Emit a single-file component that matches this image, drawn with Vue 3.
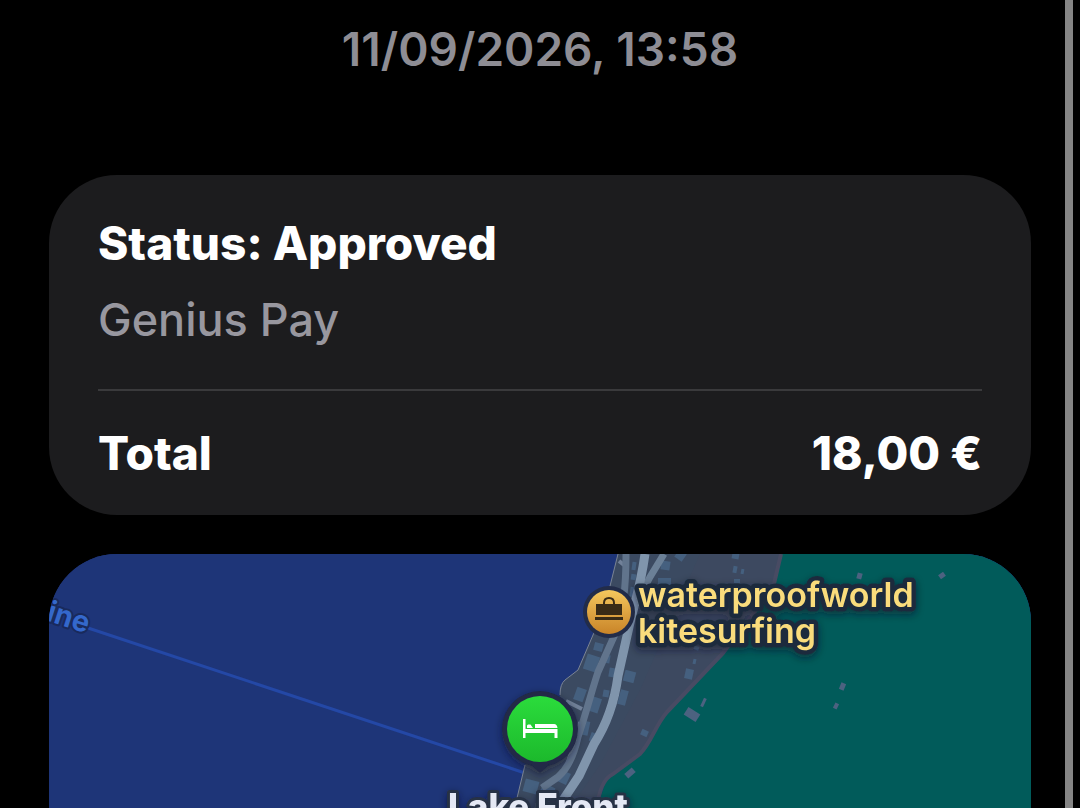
<script setup>
import { ref } from 'vue'

// Transaction details
const payment = ref({
  date: '11/09/2026, 13:58',
  status: 'Approved',
  method: 'Genius Pay',
  total: '18,00 €'
})

// Building footprints: x, y, width, height, rotation
const buildings = [
  [661, 561, 9, 9, 8],
  [676, 551, 9, 9, 35],
  [658, 578, 13, 7, 0],
  [732, 553, 7, 6, 10],
  [733, 566, 4, 7, 10],
  [741, 569, 3, 5, 10],
  [734, 579, 6, 4, 0],
  [632, 562, 4, 8, 8],
  [631, 574, 5, 6, 8],
  [630, 587, 5, 10, 8],
  [594, 643, 9, 8, 15],
  [585, 655, 13, 16, 18],
  [604, 655, 6, 8, 10],
  [609, 668, 6, 9, 10],
  [624, 671, 11, 11, 15],
  [619, 690, 8, 15, 15],
  [575, 688, 10, 13, 20],
  [588, 697, 12, 15, 18],
  [603, 690, 6, 7, 10],
  [580, 721, 9, 14, 12],
  [590, 733, 7, 9, 20],
  [570, 744, 7, 8, 15],
  [557, 771, 12, 12, 25],
  [524, 780, 14, 13, 15],
  [540, 785, 13, 15, 25],
  [685, 669, 8, 10, 12],
  [693, 659, 3, 5, 12],
  [694, 646, 5, 4, 20],
  [641, 730, 7, 6, 25]
]

const sheds = [
  [685, 710, 14, 9, 32],
  [702, 698, 3, 9, 25],
  [840, 683, 5, 7, 22],
  [834, 703, 4, 6, 25],
  [857, 573, 5, 6, 15],
  [939, 573, 6, 5, -35],
  [625, 770, 10, 6, -42]
]
</script>

<template>
  <div class="screen">
    <main class="content">
      <time class="date">{{ payment.date }}</time>

      <section class="card">
        <h1 class="line strong">Status: {{ payment.status }}</h1>
        <p class="line method">{{ payment.method }}</p>
        <div class="total strong">
          <span>Total</span>
          <span>{{ payment.total }}</span>
        </div>
      </section>

      <section class="map">
        <svg viewBox="49 554 982 254" preserveAspectRatio="xMidYMin slice" role="img" aria-label="Map">
          <defs>
            <linearGradient id="gold" x1="0" y1="0" x2="0" y2="1">
              <stop offset="0" stop-color="#f4c75d" />
              <stop offset="1" stop-color="#c98428" />
            </linearGradient>
            <linearGradient id="green" x1="0" y1="0" x2="0" y2="1">
              <stop offset="0" stop-color="#2bdc3c" />
              <stop offset="1" stop-color="#1cb92c" />
            </linearGradient>
            <filter id="shade" x="-20%" y="-50%" width="140%" height="220%">
              <feDropShadow dx="0" dy="3" stdDeviation="4" flood-color="#10182a" flood-opacity="0.55" />
            </filter>
          </defs>

          <!-- water, park and the strip of land between them -->
          <rect x="49" y="554" width="982" height="254" fill="#1e3578" />
          <path d="M76 624L525 773" fill="none" stroke="#2448a6" stroke-width="3" />
          <path d="M781 554H1031V808H597L607 777L643 750L667 712L723 653Z" fill="#015b5a" />
          <path
            d="M618 554L609 590Q605 612 593 635L578 670L565 680Q560 684 560 695L556 720L530 755L525 765L517 798V808H597Q600 780 613 774L640 754C652 741 655 726 667 712L723 653L773 588L781 554Z"
            fill="#3b4a61"
          />
          <path
            d="M700 554H781L773 588L723 653L667 712C655 726 652 741 640 754L613 774Q600 780 597 808H570L600 765L640 690Z"
            fill="#424860"
            opacity="0.4"
          />

          <rect
            v-for="(b, i) in buildings"
            :key="'b' + i"
            :x="b[0]"
            :y="b[1]"
            :width="b[2]"
            :height="b[3]"
            :transform="`rotate(${b[4]} ${b[0] + b[2] / 2} ${b[1] + b[3] / 2})`"
            fill="#45607f"
          />
          <rect
            v-for="(s, i) in sheds"
            :key="'s' + i"
            :x="s[0]"
            :y="s[1]"
            :width="s[2]"
            :height="s[3]"
            :transform="`rotate(${s[4]} ${s[0] + s[2] / 2} ${s[1] + s[3] / 2})`"
            fill="#4c6280"
          />

          <!-- roads -->
          <g fill="none" stroke-linejoin="round">
            <path d="M781 554L773 588L723 653L667 712C655 726 652 741 640 754L613 774Q600 780 597 808" stroke="#484b63" stroke-width="4" />
            <path d="M618 554L609 590Q605 612 593 635L578 670L565 680Q560 684 560 695M525 765L517 798V808" stroke="#7b8494" stroke-width="1" />
            <path d="M619 561L624 565M566 701L582 709M580 722L576 738L568 762" stroke="#718199" stroke-width="4" />
            <path d="M626 554C626 590 623 610 616 632L598 672C592 690 587 710 578 737Q572 765 558 777L542 788" stroke="#61748c" stroke-width="7" />
            <path d="M664 554L650 577L638 600" stroke="#6b8097" stroke-width="7" />
            <path d="M645 554C640 590 634 604 629 627L618 676C614 706 605 727 594 744L579 776L563 800L559 808" stroke="#8095ac" stroke-width="9" />
          </g>

          <text class="river" x="45" y="620" transform="rotate(18 45 620)">ine</text>

          <!-- shop -->
          <g>
            <circle cx="609" cy="612" r="26" fill="#222c49" />
            <circle cx="609" cy="612" r="22" fill="url(#gold)" />
            <path d="M604 605V603Q604 598 609 598Q614 598 614 603V605" fill="none" stroke="#392b16" stroke-width="2" />
            <path d="M596 604H622V615H596ZM595 617H623V620H595Z" fill="#392b16" />
          </g>
          <g class="shop" filter="url(#shade)">
            <text x="638" y="607">waterproofworld</text>
            <text x="638" y="643">kitesurfing</text>
          </g>

          <!-- hotel -->
          <g filter="url(#shade)">
            <circle cx="540" cy="729" r="38" fill="#202946" />
            <path d="M530 764H550L540 773Z" fill="#202946" />
          </g>
          <circle cx="540" cy="729" r="33" fill="url(#green)" />
          <g fill="#fff">
            <path d="M523 719H525.500V729H557.500V738H554.500V733H525.500V738H523Z" />
            <path d="M528 724.500H530.500L533 728H527V725.500ZM535 724H554Q557 724 557.500 728H535Z" />
          </g>
          <text class="hotel" x="538" y="819" filter="url(#shade)">Lake Front</text>
        </svg>
      </section>
    </main>

    <div class="rail"></div>
  </div>
</template>

<style>
body {
  margin: 0;
  background: #000;
}
</style>

<style scoped>
.screen {
  display: flex;
  height: 100vh;
  overflow: hidden;
  background: #000;
  color: #fff;
  font-family: Inter, "Liberation Sans", sans-serif;
  font-size: 46px;
  line-height: 56px;
}

.content {
  flex: 1;
  min-width: 0;
  display: flex;
  flex-direction: column;
  padding: 21px 34px 0 49px;
}

.date {
  margin-bottom: 98px;
  text-align: center;
  font-weight: 600;
  color: #8e8d94;
}

.card {
  margin-bottom: 39px;
  padding: 40px 49px 34px;
  border-radius: 68px;
  background: #1c1c1e;
}

.line {
  margin: 0;
  font-size: inherit;
}

.strong {
  font-weight: 800;
}

.method {
  margin-top: 21px;
  font-size: 45px;
  font-weight: 500;
  color: #98979f;
}

.total {
  display: flex;
  justify-content: space-between;
  margin-top: 41px;
  padding-top: 34px;
  border-top: 2px solid #3a3a3c;
}

.map {
  flex: 1;
  min-height: 0;
  overflow: hidden;
  border-radius: 68px 68px 0 0;
  background: #1e3578;
}

.map svg {
  display: block;
  width: 100%;
  height: 100%;
}

.map text {
  paint-order: stroke;
  stroke-linejoin: round;
}

.river {
  font-size: 29px;
  font-weight: 700;
  fill: #3468cc;
  stroke: #192a5c;
  stroke-width: 4px;
}

.shop {
  font-size: 34px;
  font-weight: 600;
  fill: #fadc7c;
  stroke: #1c2b3c;
  stroke-width: 9px;
}

.hotel {
  font-size: 35px;
  font-weight: 800;
  text-anchor: middle;
  fill: #e4e8f4;
  stroke: #283044;
  stroke-width: 6px;
}

.rail {
  width: 8px;
  margin-right: 7px;
  background: #858585;
}
</style>
